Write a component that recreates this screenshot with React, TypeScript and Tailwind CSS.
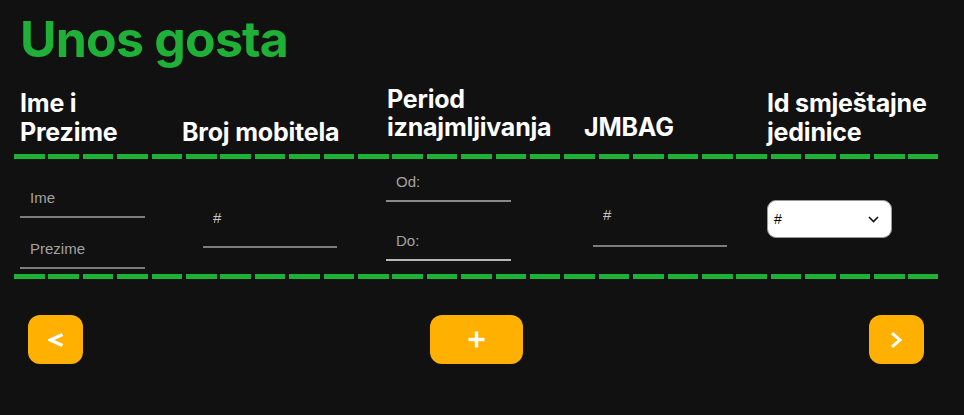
import React, { useState } from 'react';

const headers = [
  { id: 'ime', label: ['Ime i', 'Prezime'], className: 'leading-[29px]' },
  { id: 'broj', label: ['Broj mobitela'], className: 'leading-[29px]' },
  { id: 'period', label: ['Period', 'iznajmljivanja'], className: 'leading-[28px] pb-[6px]' },
  { id: 'jmbag', label: ['JMBAG'], className: 'leading-[29px] pb-[5px]' },
  { id: 'jedinica', label: ['Id smještajne', 'jedinice'], className: 'leading-[29px]' },
];

const inputBase =
  'block bg-transparent pl-[10px] pt-0 text-[15px] text-white outline-none placeholder:text-[#a3a3a3] font-["Liberation_Sans",Arial,sans-serif]';

const DashedLine = () => (
  <div className="h-[5px] w-[924px] bg-[repeating-linear-gradient(90deg,#1db236_0px,#1db236_30.5px,transparent_30.5px,transparent_34.4px)]" />
);

const App: React.FC = () => {
  const [jedinica] = useState('#');

  return (
    <div className="min-h-screen w-full bg-[#111111] font-['Inter',sans-serif] text-white">
      {/* Naslov */}
      <h1 className="pl-[20px] pt-[14px] text-[50px] font-bold leading-[50px] tracking-[-0.8px] text-[#1fb137]">
        Unos gosta
      </h1>

      {/* Tablica */}
      <div className="mt-[21px] ml-[14px] w-[924px]">
        <div className="grid grid-cols-[162px_205px_197px_183px_1fr] items-end pl-[6px]">
          {headers.map((h) => (
            <div key={h.id} className={`whitespace-nowrap text-[25px] font-bold tracking-[-0.2px] ${h.className}`}>
              {h.label.map((line) => (
                <div key={line}>{line}</div>
              ))}
            </div>
          ))}
        </div>

        <div className="mt-[7px]">
          <DashedLine />
        </div>

        <div className="grid h-[115px] grid-cols-[162px_205px_197px_183px_1fr] items-start pl-[6px]">
          {/* Ime i prezime */}
          <div className="pt-[29px]">
            <input
              placeholder="Ime"
              className={`${inputBase} h-[30px] w-[125px] border-b-2 border-[#7c7c7c] pb-[10px]`}
            />
            <input
              placeholder="Prezime"
              className={`${inputBase} mt-[21px] h-[30px] w-[125px] border-b-2 border-[#7c7c7c] pb-[10px]`}
            />
          </div>

          {/* Broj mobitela */}
          <div className="pt-[49px] pl-[21px]">
            <input
              placeholder="#"
              className={`${inputBase} h-[40px] w-[134px] border-b-2 border-[#7c7c7c] pb-[20px] placeholder:text-[#c4c4c4]`}
            />
          </div>

          {/* Period */}
          <div className="pt-[13px] -ml-[1px]">
            <input
              placeholder="Od:"
              className={`${inputBase} h-[30px] w-[125px] border-b-2 border-[#8a8a8a] pb-[9px]`}
            />
            <input
              placeholder="Do:"
              className={`${inputBase} mt-[29px] h-[30px] w-[125px] border-b-2 border-[#b8b8b8] pb-[10px]`}
            />
          </div>

          {/* JMBAG */}
          <div className="pt-[46px] pl-[9px]">
            <input
              placeholder="#"
              className={`${inputBase} h-[42px] w-[134px] border-b-2 border-[#7c7c7c] pb-[22px] placeholder:text-[#c4c4c4]`}
            />
          </div>

          {/* Smještajna jedinica */}
          <div className="pt-[41px]">
            <button className="flex h-[38px] w-[125px] items-center justify-between rounded-[9px] border border-[#9a9a9a] bg-white pl-[6px] pr-[12px] font-['Liberation_Sans',Arial,sans-serif] text-[14px] text-black">
              <span>{jedinica}</span>
              <svg width="11" height="7" viewBox="0 0 11 7" fill="none">
                <polyline points="1,1 5.5,5.5 10,1" stroke="#111" strokeWidth="1.6" />
              </svg>
            </button>
          </div>
        </div>

        <DashedLine />
      </div>

      {/* Gumbi */}
      <div className="mt-[36px] ml-[28px] flex w-[896px] items-center justify-between pb-[50px]">
        <button className="flex h-[49px] w-[55px] items-center justify-center rounded-[12px] bg-[#ffb000]">
          <svg width="16" height="14" viewBox="0 0 16 14" fill="none">
            <polyline points="14.5,1.5 2.5,7 14.5,12.5" stroke="white" strokeWidth="3.4" />
          </svg>
        </button>
        <button className="flex h-[49px] w-[93px] items-center justify-center rounded-[12px] bg-[#ffb000]">
          <svg width="17" height="17" viewBox="0 0 17 17" fill="none">
            <line x1="8.5" y1="0.5" x2="8.5" y2="16.5" stroke="white" strokeWidth="3.4" />
            <line x1="0.5" y1="8.5" x2="16.5" y2="8.5" stroke="white" strokeWidth="3.4" />
          </svg>
        </button>
        <button className="flex h-[49px] w-[55px] items-center justify-center rounded-[12px] bg-[#ffb000]">
          <svg width="13" height="16" viewBox="0 0 13 16" fill="none">
            <polyline points="2,1.2 10,8 2,14.8" stroke="white" strokeWidth="3" />
          </svg>
        </button>
      </div>
    </div>
  );
};

export default App;
